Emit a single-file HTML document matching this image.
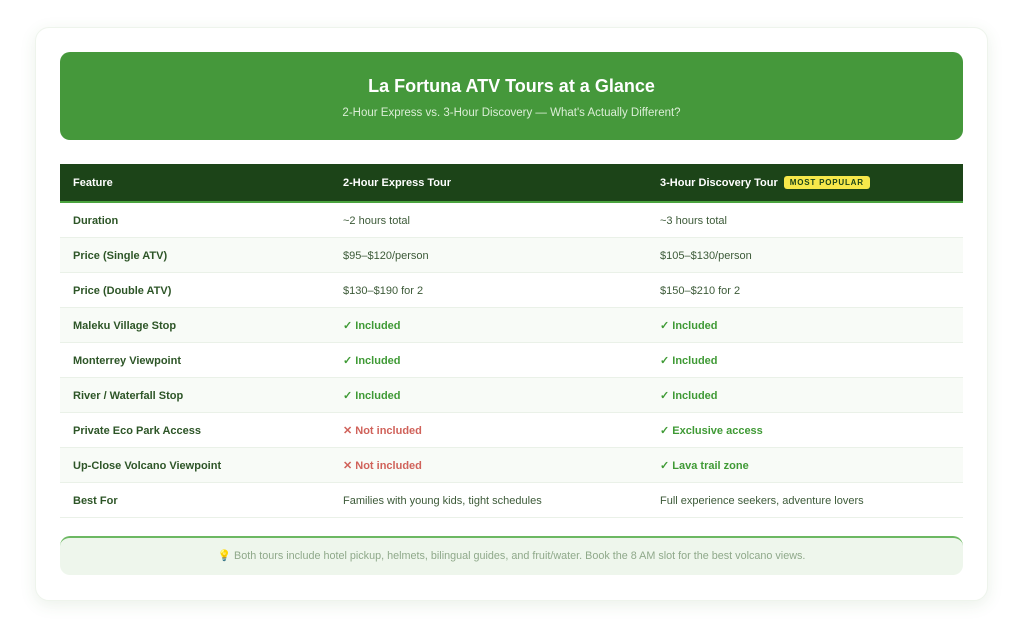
<!DOCTYPE html>
<html><head><meta charset="utf-8"><style>
*{box-sizing:border-box;margin:0;padding:0}
body{width:1024px;height:627px;background:#fff;font-family:"Liberation Sans",sans-serif;position:relative;overflow:hidden}
.card{position:absolute;left:35px;top:27px;width:953px;height:574px;background:#fff;border-radius:14px;border:1px solid #eef4ec;box-shadow:0 4px 16px rgba(60,120,50,0.10)}
.hdr{position:absolute;left:60px;top:52px;width:903px;height:88px;background:#45983b;border-radius:10px;text-align:center;color:#fff}
.hdr h1{font-size:18px;font-weight:bold;margin-top:24px}
.hdr p{font-size:11.5px;color:#dbeed6;margin-top:10px}
table{position:absolute;left:60px;top:164px;width:903px;border-collapse:collapse;font-size:11px}
th{background:#1c4418;color:#fff;text-align:left;font-weight:bold;height:38px;padding-left:13px;border-bottom:2px solid #4aa33e;font-size:11px}
td{height:35px;padding:3px 0 0 13px;color:#3c5a38;border-bottom:1px solid #eaf1e8;line-height:14px;vertical-align:middle}
td span.i{display:inline-block;height:14px;line-height:14px;overflow:hidden;vertical-align:top}
td:first-child{font-weight:bold;color:#2d5527}
tr:nth-child(odd) td{background:#f8fbf7}
.ok{color:#3f9a35;font-weight:bold}
.no{color:#d0625a;font-weight:bold}
.badge{display:inline-block;background:#f7e84a;color:#1c4418;font-size:8px;font-weight:bold;letter-spacing:0.8px;padding:2px 6px;border-radius:3px;margin-left:6px;vertical-align:1px}
.foot{position:absolute;left:60px;top:536px;width:903px;height:39px;background:#eef6ec;border-top:2px solid #6cb862;border-radius:10px;text-align:center;font-size:10.8px;color:#8fa98a;line-height:37px}
</style></head><body>
<div class="card"></div>
<div class="hdr"><h1>La Fortuna ATV Tours at a Glance</h1><p>2-Hour Express vs. 3-Hour Discovery — What's Actually Different?</p></div>
<table>
<colgroup><col style="width:270px"><col style="width:317px"><col style="width:316px"></colgroup>
<tr><th>Feature</th><th>2-Hour Express Tour</th><th>3-Hour Discovery Tour<span class="badge">MOST POPULAR</span></th></tr>
<tr><td>Duration</td><td>~2 hours total</td><td>~3 hours total</td></tr>
<tr><td>Price (Single ATV)</td><td>$95–$120/person</td><td>$105–$130/person</td></tr>
<tr><td>Price (Double ATV)</td><td>$130–$190 for 2</td><td>$150–$210 for 2</td></tr>
<tr><td>Maleku Village Stop</td><td class="ok"><span class="i">✓ Included</span></td><td class="ok"><span class="i">✓ Included</span></td></tr>
<tr><td>Monterrey Viewpoint</td><td class="ok"><span class="i">✓ Included</span></td><td class="ok"><span class="i">✓ Included</span></td></tr>
<tr><td>River / Waterfall Stop</td><td class="ok"><span class="i">✓ Included</span></td><td class="ok"><span class="i">✓ Included</span></td></tr>
<tr><td>Private Eco Park Access</td><td class="no"><span class="i">✕ Not included</span></td><td class="ok"><span class="i">✓ Exclusive access</span></td></tr>
<tr><td>Up-Close Volcano Viewpoint</td><td class="no"><span class="i">✕ Not included</span></td><td class="ok"><span class="i">✓ Lava trail zone</span></td></tr>
<tr><td>Best For</td><td>Families with young kids, tight schedules</td><td>Full experience seekers, adventure lovers</td></tr>
</table>
<div class="foot">💡 Both tours include hotel pickup, helmets, bilingual guides, and fruit/water. Book the 8 AM slot for the best volcano views.</div>
</body></html>
